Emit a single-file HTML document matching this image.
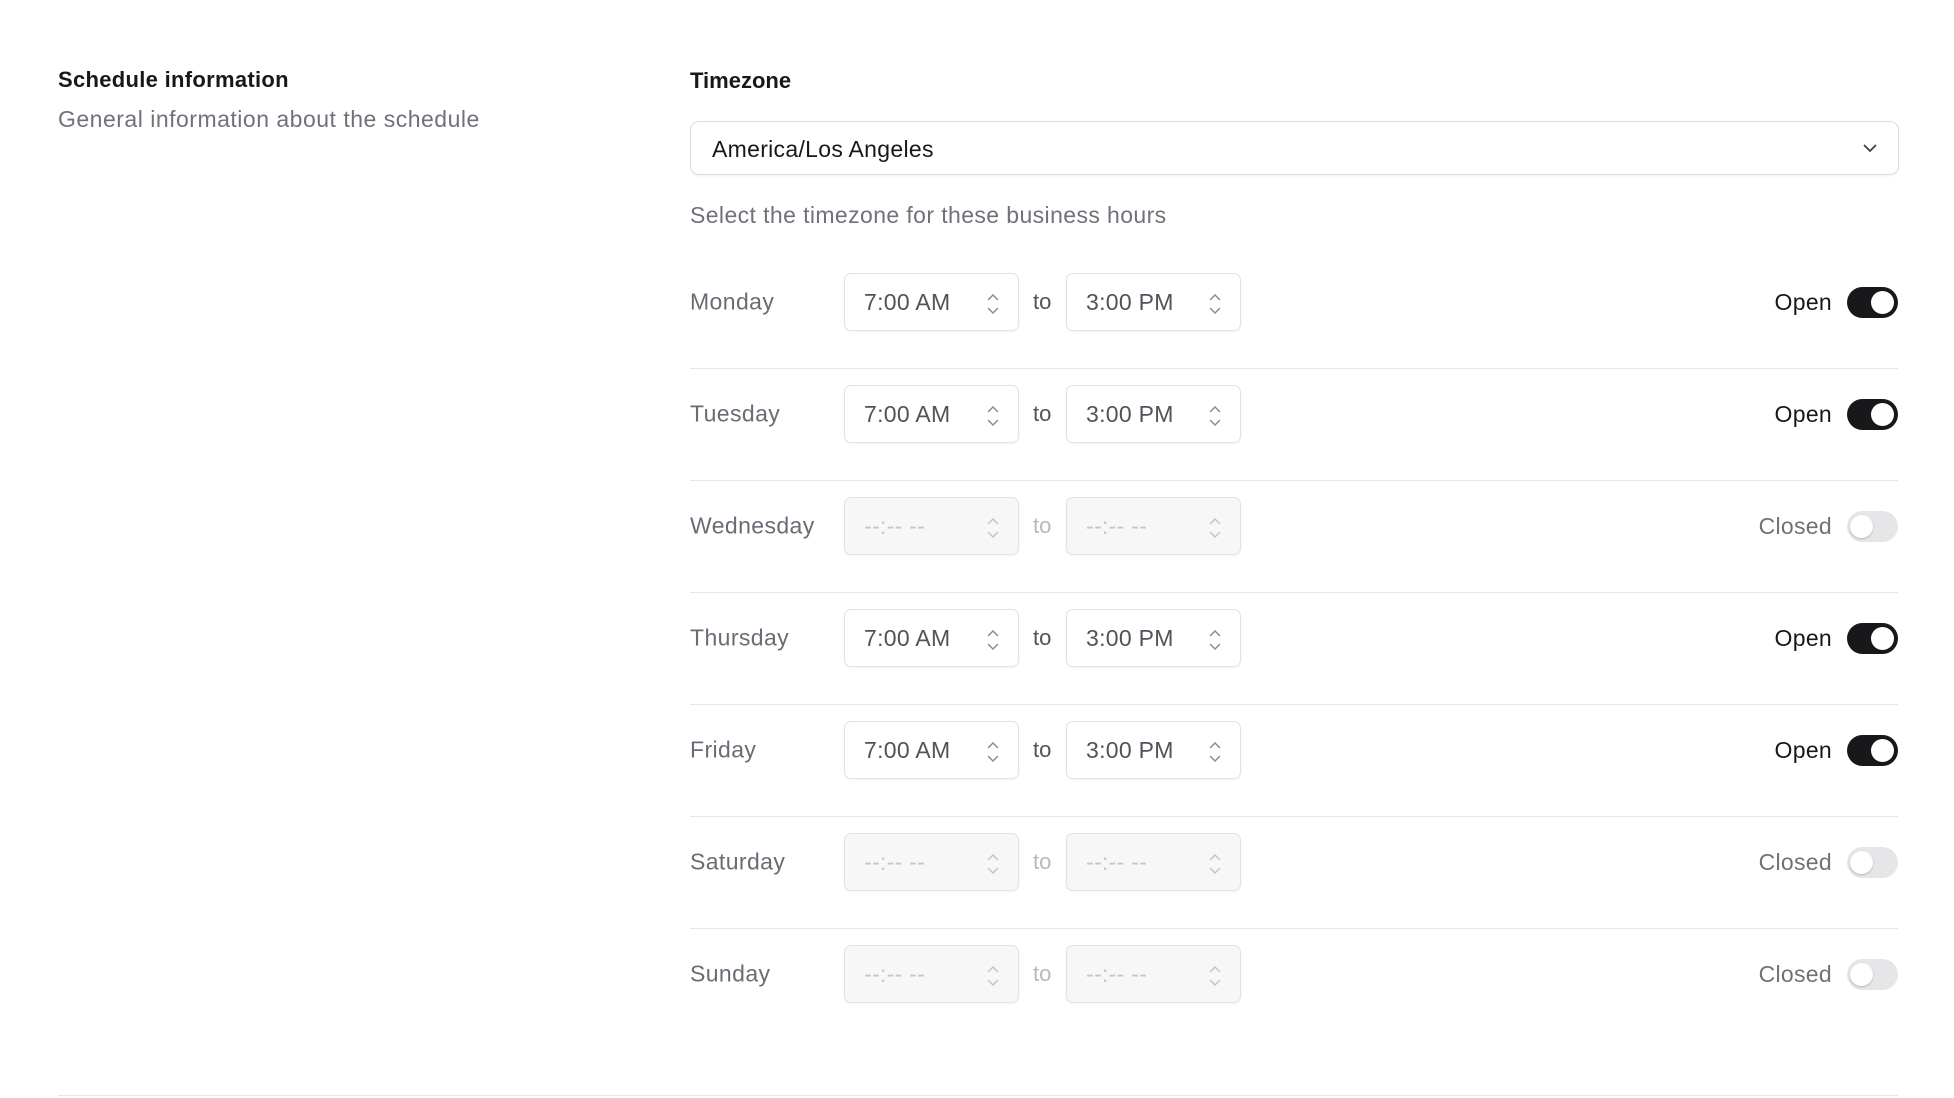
<!DOCTYPE html>
<html><head><style>
body{margin:0;width:1954px;height:1098px;background:#fff;font-family:"Liberation Sans",sans-serif;position:relative;overflow:hidden}
.a{position:absolute}
.h{left:58px;top:67px;font-size:22px;font-weight:bold;color:#18181b;letter-spacing:0.3px}
.s{left:58px;top:106px;font-size:23px;color:#71717a;letter-spacing:0.5px}
.tz{left:690px;top:68px;font-size:22px;font-weight:bold;color:#18181b}
.sel{left:690px;top:121px;width:1207px;height:52px;border:1px solid #dcdce0;border-radius:9px;box-shadow:0 1px 2px rgba(0,0,0,.06)}
.sel span{position:absolute;left:21px;top:14px;font-size:23px;color:#18181b;letter-spacing:0.3px}
.help{left:690px;top:202px;font-size:23px;color:#71717a;letter-spacing:0.4px}
.row{left:688px;width:1210px;height:112px}
.day{position:absolute;left:2px;top:45px;font-size:23px;color:#6b6b75;transform:translateY(-50%);letter-spacing:0.4px}
.in{position:absolute;top:16px;width:175px;height:58px;border:1px solid #e2e2e6;border-radius:7px;box-sizing:border-box;box-shadow:0 1px 2px rgba(0,0,0,.05)}
.in span{position:absolute;left:19px;top:15px;font-size:23px;color:#52525b;letter-spacing:0.3px}
.in svg{position:absolute;right:18px;top:18px}
.off .in{background:#f7f7f8}
.off .in span{color:#c4c4ca}
.to{position:absolute;left:345px;top:32px;font-size:22px;color:#52525b}
.off .to{color:#b8b8be}
.st{position:absolute;right:66px;top:32px;font-size:23px;color:#18181b;letter-spacing:0.3px}
.off .st{color:#71717a}
.tg{position:absolute;right:0;top:30px;width:51px;height:31px;border-radius:16px;background:#18181b;box-sizing:border-box}
.tg i{position:absolute;right:4px;top:4px;width:23px;height:23px;border-radius:50%;background:#fff}
.off .tg{background:#e6e6e9}
.off .tg i{left:3px;right:auto;box-shadow:0 1px 2px rgba(0,0,0,.2)}
.line{position:absolute;left:2px;bottom:0;width:1208px;height:1px;background:#e8e8eb}
</style></head><body>
<div class="a h">Schedule information</div>
<div class="a s">General information about the schedule</div>
<div class="a tz">Timezone</div>
<div class="a sel"><span>America/Los Angeles</span><svg class="a" style="left:1171px;top:19px" width="16" height="14" viewBox="0 0 16 14"><path d="M2 4l6 6 6-6" fill="none" stroke="#3f3f46" stroke-width="1.8"/></svg></div>
<div class="a help">Select the timezone for these business hours</div>
<script>
const days=[["Monday",1],["Tuesday",1],["Wednesday",0],["Thursday",1],["Friday",1],["Saturday",0],["Sunday",0]];
const sp='<svg width="14" height="24" viewBox="0 0 14 24"><path d="M2 8l5-5 5 5M2 16l5 5 5-5" fill="none" stroke="COL" stroke-width="1.5"/></svg>';
let h='';
days.forEach((d,i)=>{const on=d[1];const c=on?'#8a8a93':'#c4c4ca';const t1=on?'7:00 AM':'--:-- --',t2=on?'3:00 PM':'--:-- --';
h+=`<div class="a row ${on?'':'off'}" style="top:${257+i*112}px"><div class="day">${d[0]}</div>
<div class="in" style="left:156px"><span>${t1}</span>${sp.replace('COL',c)}</div><div class="to">to</div>
<div class="in" style="left:378px"><span>${t2}</span>${sp.replace('COL',c)}</div>
<div class="st">${on?'Open':'Closed'}</div><div class="tg"><i></i></div>${i<6?'<div class="line"></div>':''}</div>`});
document.write(h);
</script>
<div class="a" style="left:58px;top:1095px;width:1840px;height:1px;background:#e8e8eb"></div>
</body></html>
